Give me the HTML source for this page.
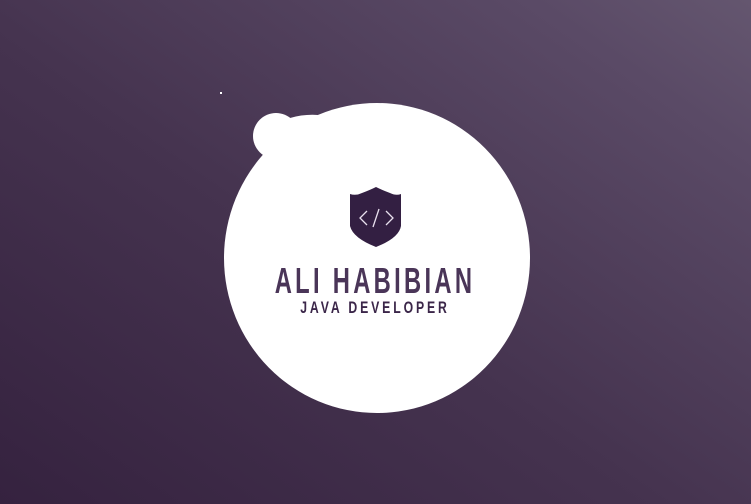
<!DOCTYPE html>
<html><head><meta charset="utf-8"><style>
html,body{margin:0;padding:0}
body{width:751px;height:504px;overflow:hidden;position:relative;
background:linear-gradient(35deg,#35223f 0%,#45334f 45%,#5a4a66 85%,#64566f 100%);
font-family:"Liberation Sans",sans-serif}
svg{position:absolute;left:0;top:0}
</style></head><body>
<svg width="751" height="504" viewBox="0 0 751 504">
<ellipse cx="377" cy="258" rx="153" ry="155" fill="#fff"/>
<circle cx="276" cy="136" r="23" fill="#fff"/>
<path d="M258 150 L290 118 Q304 114 318 115 L300 150 Z" fill="#fff"/>
<rect x="220" y="92" width="2" height="2" fill="#fff"/>
<path d="M350 194 Q356 196 362 193 Q370 190 376 187 Q382 190 390 193 Q396 196 401 194 L401 226 Q399 238 376 247 Q353 238 350 226 Z" fill="#331f42"/>
<g stroke="#e8e0ee" stroke-width="1.3" fill="none">
<path d="M367 211 L360 218 L367 225"/>
<path d="M386 211 L393 218 L386 225"/>
<path d="M379 209 L373 227"/>
</g>
<g transform="translate(375 293) scale(0.66 1)">
<text x="0" y="0" text-anchor="middle" font-weight="bold" font-size="36" letter-spacing="5" fill="#4a3558">ALI HABIBIAN</text>
</g>
<g transform="translate(375 313) scale(0.72 1)">
<text x="0" y="0" text-anchor="middle" font-weight="bold" font-size="17" letter-spacing="4" fill="#3b2649">JAVA DEVELOPER</text>
</g>
</svg>
</body></html>
